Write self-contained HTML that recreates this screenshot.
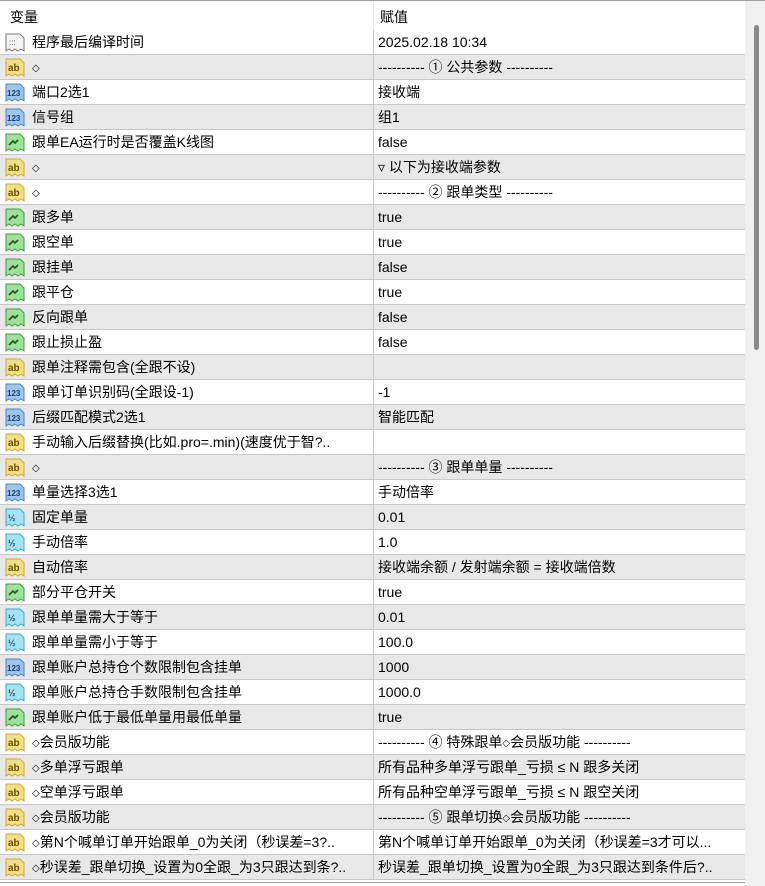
<!DOCTYPE html>
<html><head><meta charset="utf-8"><style>
*{margin:0;padding:0;box-sizing:border-box}
body{width:765px;height:886px;background:#fff;font-family:"Liberation Sans","Noto Sans CJK SC",sans-serif;font-size:14px;color:#000;position:relative;overflow:hidden}
#top{position:absolute;left:0;top:0;width:765px;height:1px;background:#a0a0a0}
#hdr{position:absolute;left:0;top:1px;width:745px;height:29px}
#hdr span{position:absolute;top:0;line-height:32px}
#hdr .d{position:absolute;left:373px;top:0;width:1px;height:29px;background:#e5e5e5}
.row{position:absolute;left:0;width:745px;height:25px;border-bottom:1px solid #c8c8c8}
.g{background:#e8e8e8}
.row .n,.row .v{position:absolute;top:0;height:24px;line-height:24px;white-space:nowrap}
.row .n{left:32px}
.row .v{left:378px}
.dm{font-size:10px;font-family:"DejaVu Sans",sans-serif;vertical-align:1px}
.row .d{position:absolute;left:373px;top:0;width:1px;height:24px;background:#c8c8c8}
.row svg{position:absolute;left:5px;top:3px}
#sb{position:absolute;left:745px;top:1px;width:20px;height:885px;background:#f0f0f0}
#th{position:absolute;left:754px;top:25px;width:5px;height:325px;background:#8a8a8a;border-radius:3px}
#bot{position:absolute;left:0;top:882px;width:745px;height:1px;background:#a0a0a0}
</style></head><body>
<div id="top"></div>
<div id="hdr"><span style="left:10px">变量</span><div class="d"></div><span style="left:380px">赋值</span></div>
<div id="rows"></div>
<div id="sb"></div><div id="th"></div>
<div id="bot"></div>
<script>
const I={
dt:'<svg width="20" height="19"><path d="M1 1h14l4 4v13l-3-2-3 2-3-2-3 2-3-2-3 2z" fill="#f4f4f4" stroke="#777"/><text x="4" y="12" font-size="8" fill="#444" font-family="Liberation Sans">:::</text></svg>',
ab:'<svg width="20" height="19"><path d="M1 1h14l4 4v13l-3-2-3 2-3-2-3 2-3-2-3 2z" fill="#f3df86" stroke="#c8a838"/><text x="3" y="13" font-size="10" font-weight="bold" fill="#6b5000" font-family="Liberation Sans">ab</text></svg>',
n:'<svg width="20" height="19"><path d="M1 1h14l4 4v13l-3-2-3 2-3-2-3 2-3-2-3 2z" fill="#9cc6ec" stroke="#4b86c4"/><text x="2" y="13" font-size="8" font-weight="bold" fill="#1c3e78" font-family="Liberation Sans">123</text></svg>',
b:'<svg width="20" height="19"><path d="M1 1h14l4 4v13l-3-2-3 2-3-2-3 2-3-2-3 2z" fill="#9ee09c" stroke="#3e9e3e"/><path d="M4 12l4-4 2 2 3-3" fill="none" stroke="#1a5a1a" stroke-width="1.6"/></svg>',
f:'<svg width="20" height="19"><path d="M1 1h14l4 4v13l-3-2-3 2-3-2-3 2-3-2-3 2z" fill="#a6e2f2" stroke="#3ea8c8"/><text x="3" y="13" font-size="9" font-weight="bold" fill="#0e5a78" font-family="Liberation Sans">½</text></svg>'};
const R=[
['dt','程序最后编译时间','2025.02.18 10:34'],
['ab','◇','---------- ① 公共参数 ----------'],
['n','端口2选1','接收端'],
['n','信号组','组1'],
['b','跟单EA运行时是否覆盖K线图','false'],
['ab','◇','▿ 以下为接收端参数'],
['ab','◇','---------- ② 跟单类型 ----------'],
['b','跟多单','true'],['b','跟空单','true'],['b','跟挂单','false'],['b','跟平仓','true'],['b','反向跟单','false'],['b','跟止损止盈','false'],
['ab','跟单注释需包含(全跟不设)',''],
['n','跟单订单识别码(全跟设-1)','-1'],
['n','后缀匹配模式2选1','智能匹配'],
['ab','手动输入后缀替换(比如.pro=.min)(速度优于智?..',''],
['ab','◇','---------- ③ 跟单单量 ----------'],
['n','单量选择3选1','手动倍率'],
['f','固定单量','0.01'],['f','手动倍率','1.0'],
['ab','自动倍率','接收端余额 / 发射端余额 = 接收端倍数'],
['b','部分平仓开关','true'],
['f','跟单单量需大于等于','0.01'],['f','跟单单量需小于等于','100.0'],
['n','跟单账户总持仓个数限制包含挂单','1000'],
['f','跟单账户总持仓手数限制包含挂单','1000.0'],
['b','跟单账户低于最低单量用最低单量','true'],
['ab','◇会员版功能','---------- ④ 特殊跟单◇会员版功能 ----------'],
['ab','◇多单浮亏跟单','所有品种多单浮亏跟单_亏损 ≤ N 跟多关闭'],
['ab','◇空单浮亏跟单','所有品种空单浮亏跟单_亏损 ≤ N 跟空关闭'],
['ab','◇会员版功能','---------- ⑤ 跟单切换◇会员版功能 ----------'],
['ab','◇第N个喊单订单开始跟单_0为关闭（秒误差=3?..','第N个喊单订单开始跟单_0为关闭（秒误差=3才可以...'],
['ab','◇秒误差_跟单切换_设置为0全跟_为3只跟达到条?..','秒误差_跟单切换_设置为0全跟_为3只跟达到条件后?..']];
const dm=s=>s.replace(/◇/g,'<span class="dm">◇</span>');
let h='';R.forEach((r,i)=>{h+=`<div class="row${i%2?' g':''}" style="top:${30+i*25}px">${I[r[0]]}<span class="n">${dm(r[1])}</span><div class="d"></div><span class="v">${dm(r[2])}</span></div>`});
document.getElementById('rows').innerHTML=h;
</script>
</body></html>
